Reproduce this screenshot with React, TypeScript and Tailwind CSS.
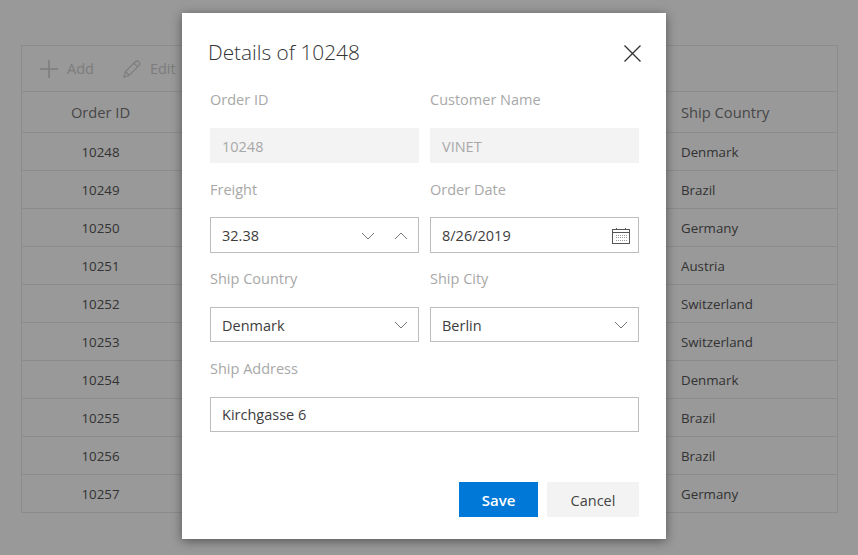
import React from "react";

const orders = [
  { id: 10248, country: "Denmark" },
  { id: 10249, country: "Brazil" },
  { id: 10250, country: "Germany" },
  { id: 10251, country: "Austria" },
  { id: 10252, country: "Switzerland" },
  { id: 10253, country: "Switzerland" },
  { id: 10254, country: "Denmark" },
  { id: 10255, country: "Brazil" },
  { id: 10256, country: "Brazil" },
  { id: 10257, country: "Germany" },
];

function Chevron({ up = false }: { up?: boolean }) {
  return (
    <svg width="14" height="8" viewBox="0 0 14 8" fill="none" stroke="#777" strokeWidth="1">
      <path d={up ? "M1 7L7 1L13 7" : "M1 1L7 7L13 1"} />
    </svg>
  );
}

function Calendar() {
  return (
    <svg width="18" height="17" viewBox="0 0 18 17" fill="none" stroke="#555" strokeWidth="1" shapeRendering="crispEdges">
      <rect x="0.5" y="2.5" width="17" height="14" />
      <path d="M0.5 5.5H17.5M4.5 0.5V2.5M13.5 0.5V2.5" />
      <path d="M4 8H15M4 10.5H15M4 13H15" stroke="#999" strokeDasharray="1 1" />
    </svg>
  );
}

function Field({ label, children, wide = false }: { label: string; children: React.ReactNode; wide?: boolean }) {
  return (
    <div className={wide ? "col-span-2" : ""}>
      <div className="h-[54.2px] pt-[14.6px] text-[14.5px] leading-[24px] text-[#a8a8a8]">{label}</div>
      {children}
    </div>
  );
}

function Box({ value, children }: { value: string; children?: React.ReactNode }) {
  return (
    <div className="flex h-[35.4px] items-center border border-[#bdbdbd] pl-[11px] text-[14.5px] text-[#3d3d3d]">
      <span className="flex-1 pt-[2px]">{value}</span>
      {children}
    </div>
  );
}

function Disabled({ value }: { value: string }) {
  return <div className="flex h-[35.4px] items-center bg-[#f3f3f3] pl-[12px] pt-[2px] text-[14.5px] text-[#a8a8a8]">{value}</div>;
}

export default function App() {
  return (
    <div className="relative h-[555px] w-[858px] overflow-hidden bg-white font-['Open_Sans','Noto_Sans',sans-serif]">
      {/* Grid behind the dialog */}
      <div className="mx-[21px] mt-[45px] w-[817px] border border-[#eaeaea] text-[13.3px] text-[#555]">
        <div className="flex h-[46px] items-center border-b border-[#eaeaea] pl-[18px] text-[14.5px] text-[#d0d0d0]">
          <svg width="18" height="18" viewBox="0 0 18 18" stroke="#d0d0d0" strokeWidth="1.5" fill="none">
            <path d="M9 0V18M0 9H18" />
          </svg>
          <span className="ml-[9px]">Add</span>
          <svg className="ml-[29px]" width="18" height="18" viewBox="0 0 18 18" stroke="#d0d0d0" strokeWidth="1.2" fill="none">
            <path d="M1 17L2.5 11.5L12.5 1.5C13.5 0.7 14.7 0.7 15.8 1.8C17 3 17 4.2 16.2 5.2L6.3 15.3L1 17ZM2.5 11.5L6.3 15.3M11 3L14.8 6.8" />
          </svg>
          <span className="ml-[9px]">Edit</span>
        </div>
        <div className="flex h-[41px] items-center border-b border-[#eaeaea] text-[14.7px] text-[#777]">
          <div className="w-[157px] text-center">Order ID</div>
          <div className="flex-1" />
          <div className="w-[156px]">Ship Country</div>
        </div>
        {orders.map((o, i) => (
          <div key={o.id} className={i < orders.length - 1 ? "flex h-[38px] items-center border-b border-[#eaeaea] pt-[2px]" : "flex h-[37px] items-center pt-[2px]"}>
            <div className="w-[157px] text-center">{o.id}</div>
            <div className="flex-1" />
            <div className="w-[156px]">{o.country}</div>
          </div>
        ))}
      </div>

      {/* Overlay + dialog */}
      <div className="absolute inset-0 bg-black/40 pl-[182px] pt-[13px]">
        <div className="h-[526px] w-[484px] bg-white pl-[28px] pr-[27px] shadow-[0_2px_10px_rgba(0,0,0,0.45)]">
          <div className="relative h-[60.6px]">
            <div className="ml-[-2px] pt-[22px] text-[20.8px] font-light leading-[34px] text-[#333]">Details of 10248</div>
            <svg className="absolute right-[-2px] top-[32px]" width="17" height="17" viewBox="0 0 17 17" stroke="#333" strokeWidth="1.3" fill="none">
              <path d="M0.5 0.5L16.5 16.5M16.5 0.5L0.5 16.5" />
            </svg>
          </div>
          <div className="grid grid-cols-[209px_209px] gap-x-[11px]">
            <Field label="Order ID">
              <Disabled value="10248" />
            </Field>
            <Field label="Customer Name">
              <Disabled value="VINET" />
            </Field>
            <Field label="Freight">
              <Box value="32.38">
                <div className="flex items-center gap-[19px] pr-[10px] pt-[1px]">
                  <Chevron />
                  <Chevron up />
                </div>
              </Box>
            </Field>
            <Field label="Order Date">
              <Box value="8/26/2019">
                <div className="pr-[8px]">
                  <Calendar />
                </div>
              </Box>
            </Field>
            <Field label="Ship Country">
              <Box value="Denmark">
                <div className="pr-[10px] pt-[1px]">
                  <Chevron />
                </div>
              </Box>
            </Field>
            <Field label="Ship City">
              <Box value="Berlin">
                <div className="pr-[10px] pt-[1px]">
                  <Chevron />
                </div>
              </Box>
            </Field>
            <Field label="Ship Address" wide>
              <Box value="Kirchgasse 6" />
            </Field>
          </div>
          <div className="mt-[50px] flex justify-end gap-[9px]">
            <button className="h-[35px] w-[79px] bg-[#0078d7] pt-[2px] text-[15px] font-semibold text-white">Save</button>
            <button className="h-[35px] w-[92px] bg-[#f3f3f3] pt-[2px] text-[14.5px] font-medium text-[#444]">Cancel</button>
          </div>
        </div>
      </div>
    </div>
  );
}
